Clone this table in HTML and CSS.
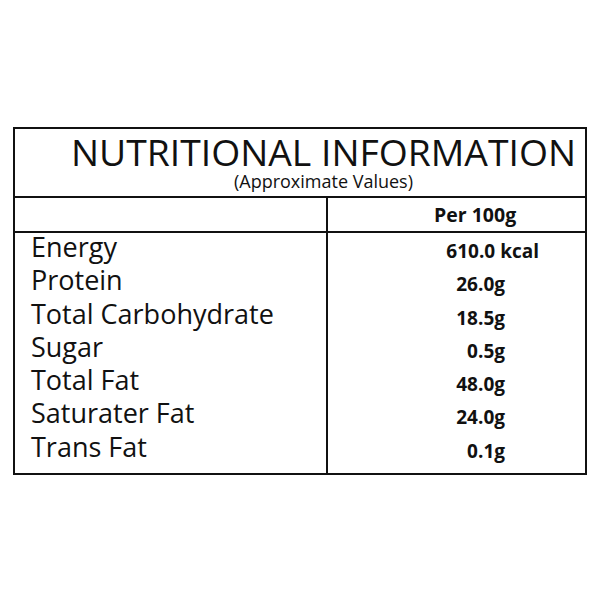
FILE: index.html
```html
<!DOCTYPE html>
<html>
  <head>
    <title>Nutritional Information</title>
    <meta charset="UTF-8" />
    <link rel="stylesheet" href="styles.css">
  </head>

  <body>
    <div class="factsFrame">
      <div class="titleArea">
        <h1 class="title">NUTRITIONAL INFORMATION</h1>
        <p class="subtitle">(Approximate Values)</p>
      </div>

      <div class="headRow">
        <div class="headLabel"></div>
        <div class="headValue">Per 100g</div>
      </div>

      <div class="bodyRows">
        <div class="labels">
          <p>Energy</p>
          <p>Protein</p>
          <p>Total Carbohydrate</p>
          <p>Sugar</p>
          <p>Total Fat</p>
          <p>Saturater Fat</p>
          <p>Trans Fat</p>
        </div>

        <div class="values">
          <p class="kcal">610.0 kcal</p>
          <p>26.0g</p>
          <p>18.5g</p>
          <p>0.5g</p>
          <p>48.0g</p>
          <p>24.0g</p>
          <p>0.1g</p>
        </div>
      </div>
    </div>
  </body>
</html>
```

FILE: styles.css
```css
html * {
  margin: 0;
  padding: 0;
}

body {
  font-family: "Open Sans", "DejaVu Sans", sans-serif;
  background: #fff;
  color: #111;
  margin: 0;
  padding: 127px 13px 0;
}

.factsFrame {
  border: 2px solid #111;
  width: 570px;
}

.titleArea {
  height: 67px;
  border-bottom: 2px solid #111;
  text-align: center;
  padding-left: 47px;
}

.title {
  font-size: 37.3px;
  font-weight: 400;
  line-height: 40px;
  padding-top: 3px;
  white-space: nowrap;
}

.subtitle {
  font-size: 18px;
  line-height: 18px;
}

.headRow {
  display: flex;
  height: 33px;
  border-bottom: 2px solid #111;
}

.headLabel {
  width: 311px;
  border-right: 2px solid #111;
}

.headValue {
  flex: 1;
  font-size: 19.5px;
  font-weight: 700;
  line-height: 33px;
  padding-left: 106px;
}

.bodyRows {
  display: flex;
  height: 240px;
}

.labels {
  width: 295px;
  padding-left: 16px;
  margin-top: -3px;
  font-size: 27px;
}

.labels p {
  line-height: 33.3px;
}

.values {
  flex: 1;
  padding-top: 2px;
  border-left: 2px solid #111;
  font-size: 19px;
  font-weight: 700;
  text-align: right;
  padding-right: 80px;
}

.values p {
  line-height: 33.3px;
}

.values .kcal {
  margin-right: -34px;
}
```
